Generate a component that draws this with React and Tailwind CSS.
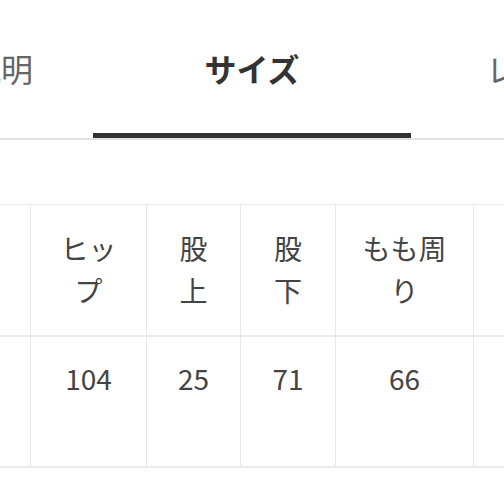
import React from "react";

const cols = [
  { w: "w-[181px]", head: "ウエスト", val: "" },
  { w: "w-[116px]", head: ["ヒッ", "プ"], val: "104" },
  { w: "w-[94px]", head: ["股", "上"], val: "25" },
  { w: "w-[95px]", head: ["股", "下"], val: "71" },
  { w: "w-[138px]", head: ["もも周", "り"], val: "66" },
  { w: "w-[140px]", head: "", val: "" },
];

function Tabs() {
  return (
    <div className="flex border-b-2 border-[#e2e2e2] h-[140px]">
      <div className="w-[93px] shrink-0 flex justify-end pr-[60px] pt-[52px] overflow-visible">
        <span className="text-[32px] leading-[32px] text-[#666] whitespace-nowrap">商品説明</span>
      </div>
      <div className="w-[318px] shrink-0 h-[138px] border-b-[5px] border-[#333] flex justify-center pt-[52px]">
        <span className="text-[32px] leading-[32px] font-bold text-[#333]">サイズ</span>
      </div>
      <div className="flex-1 pl-[75px] pt-[52px] overflow-hidden">
        <span className="text-[32px] leading-[32px] text-[#666] whitespace-nowrap">レビュー</span>
      </div>
    </div>
  );
}

function SizeTable() {
  return (
    <div className="mt-[64px] -ml-[150px] w-[764px]">
      <div className="flex border-t border-b-2 border-[#eaeaea]">
        {cols.map((c, i) => (
          <div
            key={i}
            className={`${c.w} shrink-0 h-[130px] pt-[22px] border-r border-[#e8e8e8] text-[28px] leading-[42px] text-[#444] ${
              i === 0 ? "text-right pr-[31px]" : "text-center"
            }`}
          >
            {Array.isArray(c.head) ? (
              <>
                {c.head[0]}
                <br />
                {c.head[1]}
              </>
            ) : (
              <span className="whitespace-nowrap">{c.head}</span>
            )}
          </div>
        ))}
      </div>
      <div className="flex border-b-2 border-[#eaeaea]">
        {cols.map((c, i) => (
          <div
            key={i}
            className={`${c.w} shrink-0 h-[129px] pt-[20px] border-r border-[#e8e8e8] text-center text-[28px] leading-[42px] text-[#444]`}
          >
            {c.val}
          </div>
        ))}
      </div>
    </div>
  );
}

export default function App() {
  return (
    <div className="w-[504px] h-[504px] overflow-hidden bg-white font-['Noto_Sans_CJK_JP','Noto_Sans',sans-serif]">
      <Tabs />
      <SizeTable />
    </div>
  );
}
